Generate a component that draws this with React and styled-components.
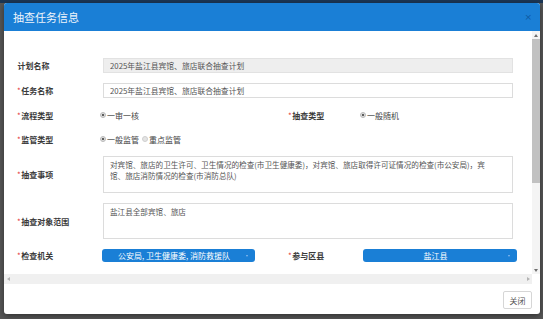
import React from "react";
import styled, { createGlobalStyle } from "styled-components";

const FONT = `"Noto Sans CJK SC", "Noto Sans", "Liberation Sans", sans-serif`;

const Global = createGlobalStyle`
  html, body { margin: 0; padding: 0; }
  body {
    font-family: ${FONT};
    background: #575757;
    overflow: hidden;
  }
`;

const Backdrop = styled.div`
  width: 543px;
  height: 319px;
  box-sizing: border-box;
  padding: 3px 0 0 4px;
  background: linear-gradient(#1b3656 0 3px, #575757 3px);
`;

const Modal = styled.div`
  width: 536px;
  height: 311px;
  background: #fff;
  border-radius: 3px;
  overflow: hidden;
  display: flex;
  flex-direction: column;
  box-shadow: 0 2px 6px rgba(0, 0, 0, 0.45);
`;

const Header = styled.div`
  flex: none;
  height: 28px;
  box-sizing: border-box;
  background: #1a7fd6;
  display: flex;
  align-items: center;
  justify-content: space-between;
  padding: 0 8px 0 9px;
`;

const Title = styled.h4`
  margin: 0;
  font-size: 11px;
  font-weight: normal;
  color: #eef4fb;
  line-height: 1;
`;

const CloseX = styled.button`
  border: 0;
  background: none;
  padding: 0;
  font-family: "DejaVu Sans", sans-serif;
  font-size: 9px;
  line-height: 1;
  color: #0d5aa3;
`;

/* scrollable body: viewport + drawn scrollbars (headless capture hides native ones) */
const BodyFrame = styled.div`
  flex: none;
  height: 253px;
  display: grid;
  grid-template-columns: 1fr 8px;
  grid-template-rows: 1fr 10px;
`;

const Viewport = styled.div`
  overflow: hidden;
  min-width: 0;
  min-height: 0;
`;

const VBar = styled.div`
  display: flex;
  flex-direction: column;
  background: #f4f4f4;
`;

const HBar = styled.div`
  display: flex;
  align-items: center;
  justify-content: space-between;
  background: #f0f0f0;
  padding: 0 2px 0 3px;
`;

const Corner = styled.div`
  background: #fff;
`;

const ArrowBox = styled.div`
  flex: none;
  height: 8px;
  display: flex;
  align-items: center;
  justify-content: center;
`;

const Tri = styled.span`
  width: 0;
  height: 0;
  border: 2px solid transparent;
  ${(p) =>
    p.$dir === "up"
      ? "border-bottom: 3px solid #6f6f6f; border-top-width: 0;"
      : p.$dir === "down"
      ? "border-top: 3px solid #6f6f6f; border-bottom-width: 0;"
      : p.$dir === "left"
      ? "border-right: 3px solid #b3b3b3; border-left-width: 0;"
      : "border-left: 3px solid #b3b3b3; border-right-width: 0;"}
`;

const Track = styled.div`
  flex: 1;
`;

const Thumb = styled.div`
  height: 144px;
  background: #c1c1c1;
`;

const Form = styled.div`
  display: grid;
  grid-template-columns: 86px 152px 33px 72px 157px;
  row-gap: 10px;
  align-items: center;
  padding: 27px 0 0 13px;
`;

const Label = styled.div`
  grid-column: ${(p) => p.$col || 1};
  font-size: 8px;
  font-weight: bold;
  color: #3a3a3a;
  white-space: nowrap;
  &::before {
    content: ${(p) => (p.$req ? '"*"' : '""')};
    color: #e5393a;
    font-weight: normal;
    margin-right: 0.5px;
  }
`;

const TextInput = styled.input`
  grid-column: 2 / span 4;
  width: 410px;
  height: 15px;
  box-sizing: border-box;
  border: 1px solid ${(p) => (p.$disabled ? "#e2e2e2" : "#dcdcdc")};
  background: ${(p) => (p.$disabled ? "#eeeeee" : "#fff")};
  padding: 0 6px;
  margin: 0;
  font-family: ${FONT};
  font-size: 7.8px;
  color: #555;
  outline: none;
`;

const TextArea = styled.textarea`
  grid-column: 2 / span 4;
  width: 410px;
  height: ${(p) => p.$h}px;
  box-sizing: border-box;
  border: 1px solid #dcdcdc;
  padding: 3px 20px 0 6px;
  margin: 0;
  font-family: ${FONT};
  font-size: 7.6px;
  line-height: 10.5px;
  color: #555;
  resize: none;
  overflow: hidden;
  outline: none;
`;

const RadioGroup = styled.div`
  grid-column: ${(p) => p.$col};
  height: 14px;
  display: flex;
  align-items: center;
  gap: 3px;
  margin-left: ${(p) => p.$shift || 0}px;
`;

const RadioOption = styled.label`
  display: inline-flex;
  align-items: center;
  gap: 1px;
  font-size: 8px;
  color: #444;
  white-space: nowrap;
`;

const RadioDot = styled.span`
  width: 4px;
  height: 4px;
  border-radius: 50%;
  border: 1px solid ${(p) => (p.$on ? "#b8b8b8" : "#cfcfcf")};
  background: ${(p) =>
    p.$on
      ? "radial-gradient(circle, #5e5e5e 0 1.1px, #e2e2e2 1.6px)"
      : "#e4e4e4"};
`;

const Select = styled.div`
  grid-column: ${(p) => p.$col};
  justify-self: end;
  width: ${(p) => p.$w}px;
  height: 13px;
  box-sizing: border-box;
  border-radius: 3px;
  background: #1a7fd6;
  color: #fff;
  font-size: 8px;
  display: flex;
  align-items: center;
  padding: 0 4px 0 0;
`;

const SelectText = styled.span`
  flex: 1;
  text-align: center;
  white-space: nowrap;
`;

const Caret = styled.span`
  flex: none;
  width: 0;
  height: 0;
  margin: 1px 3px 0 0;
  border-left: 1.5px solid transparent;
  border-right: 1.5px solid transparent;
  border-top: 2px solid #8dbdf0;
`;

const Footer = styled.div`
  flex: 1;
  display: flex;
  justify-content: flex-end;
  align-items: flex-start;
  padding: 7px 8px 0 0;
`;

const Button = styled.button`
  width: 29px;
  height: 18px;
  padding: 0;
  border: 1px solid #d6d6d6;
  border-radius: 2px;
  background: #fff;
  font-family: ${FONT};
  font-size: 8px;
  color: #555;
`;

function Radio({ on, children }) {
  return (
    <RadioOption>
      <RadioDot $on={on} />
      {children}
    </RadioOption>
  );
}

export default function App() {
  return (
    <>
      <Global />
      <Backdrop>
        <Modal>
          <Header>
            <Title>抽查任务信息</Title>
            <CloseX>×</CloseX>
          </Header>
          <BodyFrame>
            <Viewport>
              <Form>
                <Label>计划名称</Label>
                <TextInput $disabled readOnly value="2025年盐江县宾馆、旅店联合抽查计划" />

                <Label $req>任务名称</Label>
                <TextInput readOnly value="2025年盐江县宾馆、旅店联合抽查计划" />

                <Label $req>流程类型</Label>
                <RadioGroup $col={2} $shift={-3}>
                  <Radio on>一审一核</Radio>
                </RadioGroup>
                <Label $req $col={4}>抽查类型</Label>
                <RadioGroup $col={5}>
                  <Radio on>一般随机</Radio>
                </RadioGroup>

                <Label $req>监管类型</Label>
                <RadioGroup $col={2} $shift={-3}>
                  <Radio on>一般监管</Radio>
                  <Radio>重点监管</Radio>
                </RadioGroup>

                <Label $req>抽查事项</Label>
                <TextArea
                  $h={37}
                  readOnly
                  value="对宾馆、旅店的卫生许可、卫生情况的检查(市卫生健康委)，对宾馆、旅店取得许可证情况的检查(市公安局)，宾馆、旅店消防情况的检查(市消防总队)"
                />

                <Label $req>抽查对象范围</Label>
                <TextArea $h={36} readOnly value="盐江县全部宾馆、旅店" />

                <Label $req>检查机关</Label>
                <Select $col={2} $w={153}>
                  <SelectText>公安局, 卫生健康委, 消防救援队</SelectText>
                  <Caret />
                </Select>
                <Label $req $col={4}>参与区县</Label>
                <Select $col={5} $w={154}>
                  <SelectText>盐江县</SelectText>
                  <Caret />
                </Select>
              </Form>
            </Viewport>
            <VBar>
              <ArrowBox>
                <Tri $dir="up" />
              </ArrowBox>
              <Track>
                <Thumb />
              </Track>
              <ArrowBox>
                <Tri $dir="down" />
              </ArrowBox>
            </VBar>
            <HBar>
              <Tri $dir="left" />
              <Tri $dir="right" />
            </HBar>
            <Corner />
          </BodyFrame>
          <Footer>
            <Button>关闭</Button>
          </Footer>
        </Modal>
      </Backdrop>
    </>
  );
}
